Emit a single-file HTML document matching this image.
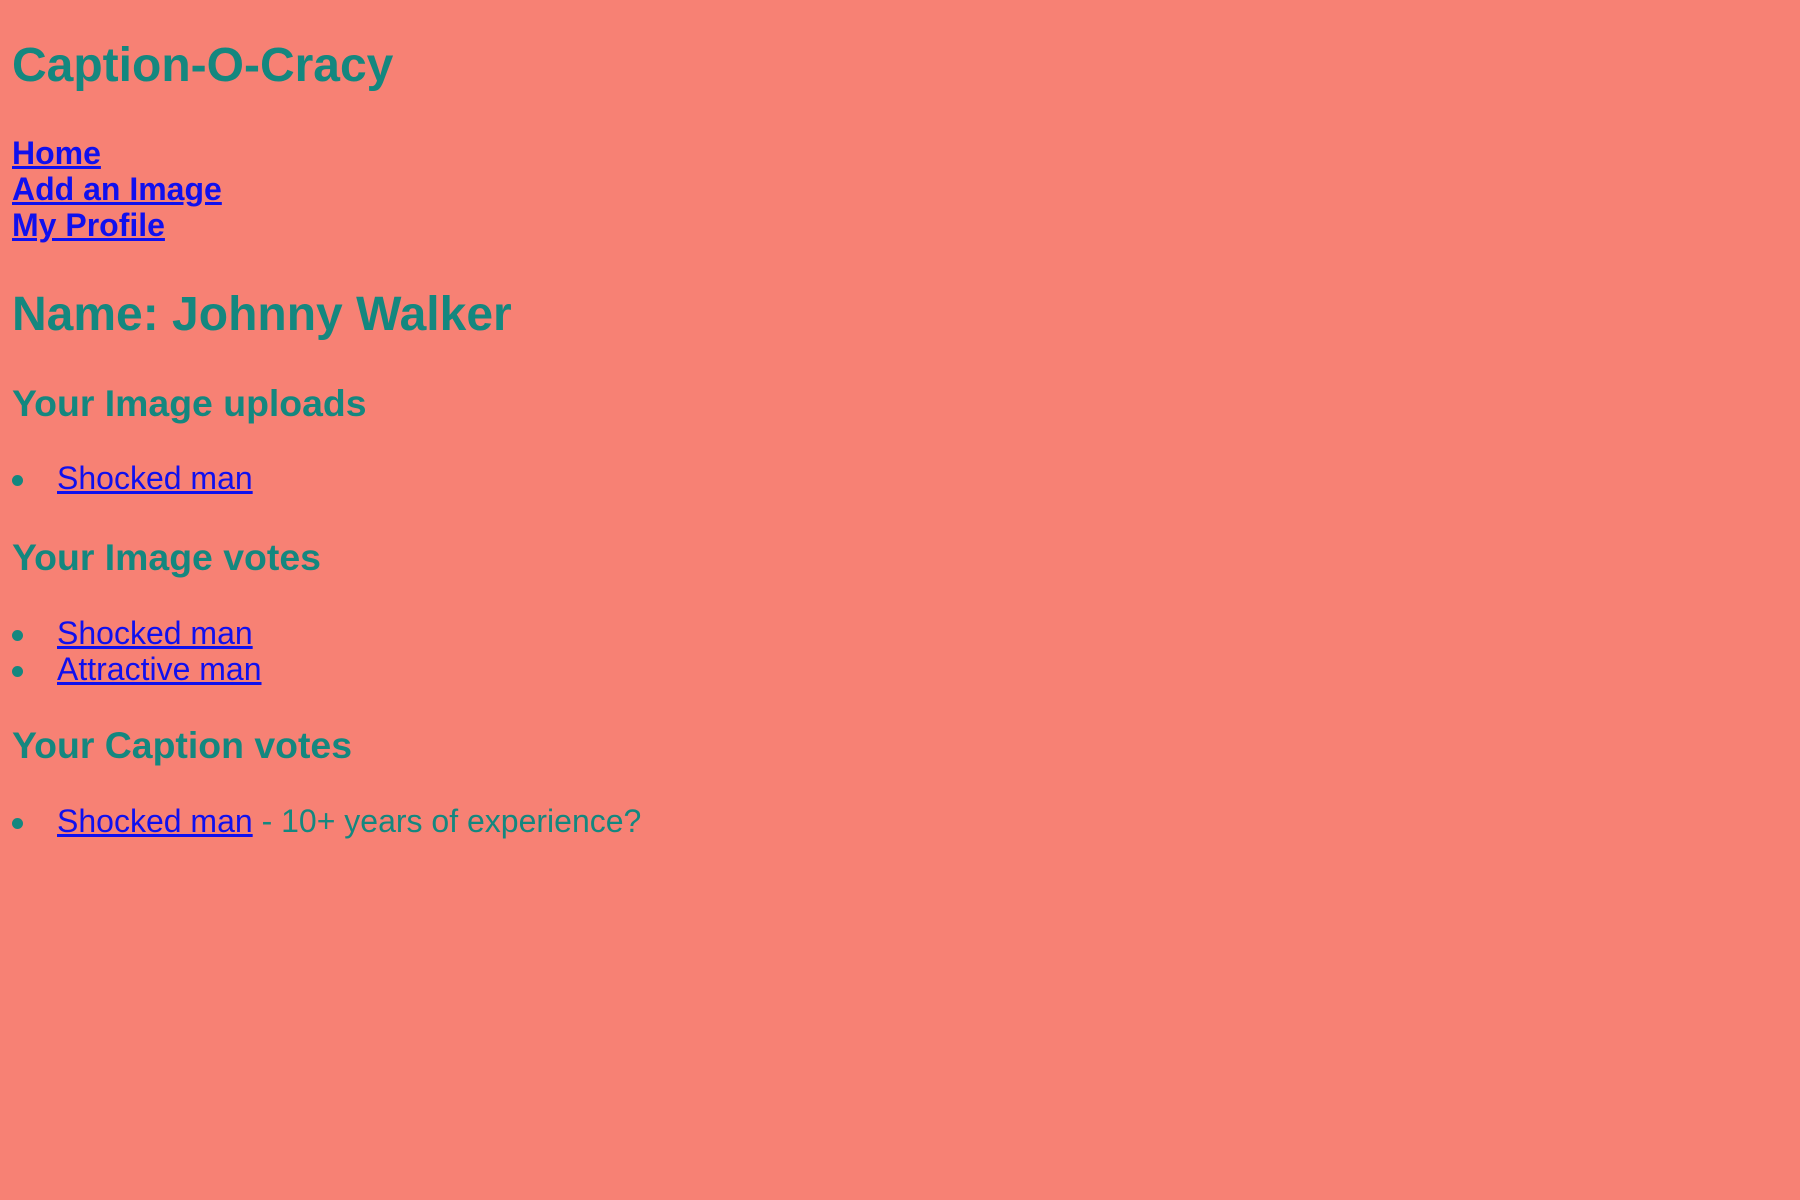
<!DOCTYPE html>
<html><head><meta charset="utf-8"><style>
html,body{margin:0;padding:0;width:1800px;height:1200px;background:#f78174;overflow:hidden}
body{font-family:"Liberation Sans",Arial,sans-serif;color:#14877f;position:relative}
.a{position:absolute;left:12px;white-space:nowrap;line-height:1;margin:0}
a{color:#1010ee;text-decoration:underline}
.t{font-size:48px;font-weight:bold}
.n{font-size:32px;font-weight:bold}
.h{font-size:37.4px;font-weight:bold}
.l{font-size:32px;left:57px}
.b{position:absolute;left:12px;width:11px;height:11px;border-radius:50%;background:#14877f}
</style></head><body>
<div class="a t" style="top:42px">Caption-O-Cracy</div>
<div class="a n" style="top:137px"><a>Home</a></div>
<div class="a n" style="top:173px"><a>Add an Image</a></div>
<div class="a n" style="top:209px"><a>My Profile</a></div>
<div class="a t" style="top:291px">Name: Johnny Walker</div>
<div class="a h" style="top:385px">Your Image uploads</div>
<div class="b" style="top:475px"></div>
<div class="a l" style="top:462px"><a>Shocked man</a></div>
<div class="a h" style="top:539px">Your Image votes</div>
<div class="b" style="top:630px"></div>
<div class="a l" style="top:617px"><a>Shocked man</a></div>
<div class="b" style="top:666px"></div>
<div class="a l" style="top:653px"><a>Attractive man</a></div>
<div class="a h" style="top:727px">Your Caption votes</div>
<div class="b" style="top:818px"></div>
<div class="a l" style="top:805px"><a>Shocked man</a> - 10+ years of experience?</div>
</body></html>
